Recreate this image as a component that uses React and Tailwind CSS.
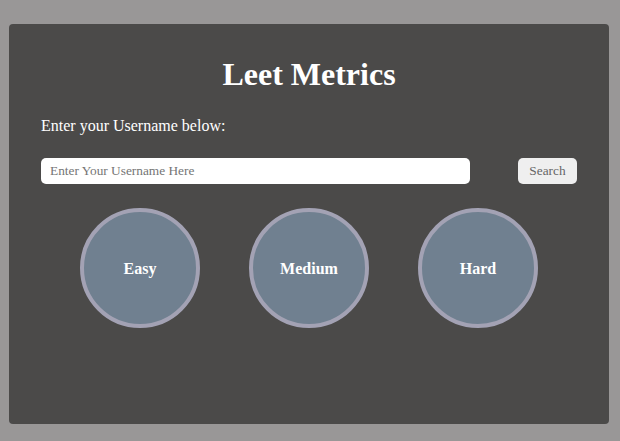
export default function App() {
  const serif = { fontFamily: '"Liberation Serif", "Times New Roman", serif' };
  return (
    <div className="min-h-[441px] w-full bg-[#999797] pt-6 pl-[9px]" style={serif}>
      <div className="flex h-[400px] w-[600px] flex-col gap-6 rounded-[4px] bg-[#4b4a49] p-8 text-white">
        <h1 className="m-0 text-center text-[32px] font-bold leading-[37px]">Leet Metrics</h1>
        <p className="m-0 text-[16px] leading-[17px]">Enter your Username below:</p>
        <div className="flex items-center justify-between">
          <input
            type="text"
            placeholder="Enter Your Username Here"
            className="h-[26px] w-[429px] rounded-[5px] bg-white px-[9px] text-[13.33px] text-black outline-none placeholder:text-[#757575]"
            style={serif}
          />
          <button
            className="h-[26px] w-[59px] rounded-[5px] bg-[#efefef] text-[13.33px] text-[#666666]"
            style={serif}
          >
            Search
          </button>
        </div>
        <div className="flex justify-center gap-[49px]">
          {['Easy', 'Medium', 'Hard'].map((t) => (
            <div
              key={t}
              className="flex h-[120px] w-[120px] items-center justify-center rounded-full border-4 border-[#a3a2b4] bg-[#708090] pt-px text-[16px] font-bold"
            >
              {t}
            </div>
          ))}
        </div>
      </div>
    </div>
  );
}
